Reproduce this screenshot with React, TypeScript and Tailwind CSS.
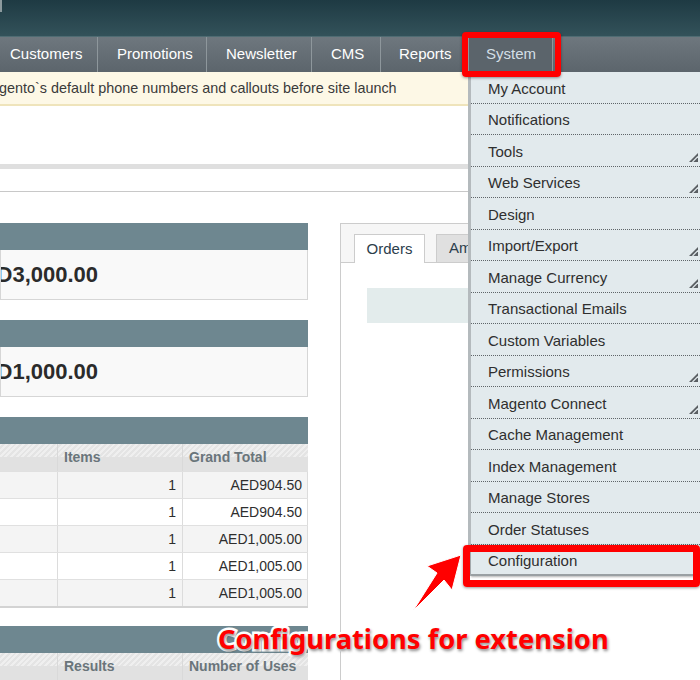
import React from 'react';

const navItems: { label: string; w: string; pl: string }[] = [
  { label: 'Customers', w: 'w-[98px]', pl: 'pl-[10px]' },
  { label: 'Promotions', w: 'w-[109px]', pl: 'pl-[19px]' },
  { label: 'Newsletter', w: 'w-[105px]', pl: 'pl-[19px]' },
  { label: 'CMS', w: 'w-[69px]', pl: 'pl-[19px]' },
  { label: 'Reports', w: 'w-[88px]', pl: 'pl-[18px]' },
];

const menuItems: { label: string; sub?: boolean }[] = [
  { label: 'My Account' },
  { label: 'Notifications' },
  { label: 'Tools', sub: true },
  { label: 'Web Services', sub: true },
  { label: 'Design' },
  { label: 'Import/Export', sub: true },
  { label: 'Manage Currency', sub: true },
  { label: 'Transactional Emails' },
  { label: 'Custom Variables' },
  { label: 'Permissions', sub: true },
  { label: 'Magento Connect', sub: true },
  { label: 'Cache Management' },
  { label: 'Index Management' },
  { label: 'Manage Stores' },
  { label: 'Order Statuses' },
  { label: 'Configuration' },
];

const orders = ['AED904.50', 'AED904.50', 'AED1,005.00', 'AED1,005.00', 'AED1,005.00'];

const headBg =
  'bg-[linear-gradient(to_bottom,transparent_50%,#e1e1e1_50%),repeating-linear-gradient(135deg,#efefef_0_2px,#e4e4e4_2px_4px)]';

const SubArrow = () => (
  <svg width="9" height="9" viewBox="0 0 9 9" className="absolute right-[2px] bottom-[4px]">
    <polygon points="9,0 9,9 0,9" fill="#5a5f63" />
    <line x1="9" y1="3.5" x2="3.5" y2="9" stroke="#e2eaed" strokeWidth="1.2" />
  </svg>
);

const TotalBox = ({ value }: { value: string }) => (
  <div>
    <div className="h-[27px] bg-[#6e8790]" />
    <div className="h-[50px] bg-[#f9f9f9] border border-t-0 border-[#d6d6d6] flex items-center overflow-hidden">
      <span className="-ml-[35px] text-[22px] font-bold text-[#2b2b2b] whitespace-nowrap">{value}</span>
    </div>
  </div>
);

export default function App() {
  return (
    <div className="relative w-[700px] h-[680px] overflow-hidden bg-white font-['Liberation_Sans',Arial,sans-serif]">
      {/* top header */}
      <div className="h-[37px] bg-[linear-gradient(to_bottom,#1e3a43,#33525a)] border-b border-[#4f6c73]">
        <div className="w-[2px] h-[12px] bg-[#8c9a9e]" />
      </div>

      {/* nav */}
      <div className="h-[35px] flex bg-[linear-gradient(to_bottom,#6e777e,#5c656c)] text-[15px] text-white whitespace-nowrap">
        {navItems.map((n) => (
          <div key={n.label} className={`${n.w} ${n.pl} shrink-0 flex items-center border-r border-[#8e979c]`}>
            {n.label}
          </div>
        ))}
        <div className="w-[84px] shrink-0 flex items-center pl-[17px] bg-[#5b646b] text-[#d3dfe6] border-r border-[#8e979c]">
          System
        </div>
      </div>

      {/* notice */}
      <div className="h-[34px] bg-[#fdf8e6] border-b-2 border-[#efe4bb] flex items-center pt-[2px] text-[14.4px] text-[#3a3a3a] whitespace-nowrap">
        <span className="-ml-[21px]">Magento`s default phone numbers and callouts before site launch</span>
      </div>

      <div className="h-[58px]" />
      <div className="h-[5px] bg-[#dfdfdf]" />
      <div className="h-[23px] border-b border-[#c8c8c8]" />

      {/* content */}
      <div className="flex pt-[31px]">
        <div className="w-[308px] flex flex-col gap-[20px] shrink-0">
          <TotalBox value="AED3,000.00" />
          <TotalBox value="AED1,000.00" />

          <div>
            <div className="h-[27px] bg-[#6e8790]" />
            <div className={`grid grid-cols-[58px_125px_125px] h-[27px] text-[14px] font-bold text-[#6a757b] ${headBg}`}>
              <div className="border-r border-[#d9d9d9]" />
              <div className="border-r border-[#d9d9d9] pl-[6px] flex items-center">Items</div>
              <div className="pl-[6px] flex items-center">Grand Total</div>
            </div>
            <div className="border-b-2 border-[#d3d3d3]">
              {orders.map((o, i) => (
                <div
                  key={i}
                  className={`grid grid-cols-[58px_125px_125px] h-[27px] text-[14px] text-[#2e2e2e] border-t border-[#e0e0e0] ${
                    i % 2 === 0 ? 'bg-[#f4f4f4]' : 'bg-white'
                  }`}
                >
                  <div className="border-r border-[#dcdcdc]" />
                  <div className="border-r border-[#dcdcdc] flex items-center justify-end pr-[6px]">1</div>
                  <div className="border-r border-[#dcdcdc] flex items-center justify-end pr-[5px]">{o}</div>
                </div>
              ))}
            </div>
          </div>

          <div className="-mt-[2px]">
            <div className="h-[27px] bg-[#6e8790]" />
            <div className={`grid grid-cols-[58px_125px_125px] h-[27px] text-[14px] font-bold text-[#6a757b] ${headBg}`}>
              <div className="border-r border-[#d9d9d9]" />
              <div className="border-r border-[#d9d9d9] pl-[6px] flex items-center">Results</div>
              <div className="pl-[6px] flex items-center">Number of Uses</div>
            </div>
          </div>
        </div>

        {/* right panel */}
        <div className="ml-[32px] flex-1 h-[460px] border-l border-t border-[#cccccc]">
          <div className="h-[39px] bg-[#f6f6f6] border-b border-[#cccccc] flex items-end pl-[13px] gap-[11px]">
            <div className="w-[71px] h-[29px] -mb-px bg-white border border-b-0 border-[#cccccc] flex items-center justify-center text-[15px] text-[#2c3e4c]">
              Orders
            </div>
            <div className="w-[90px] h-[28px] bg-[#e0e0e0] border border-b-0 border-[#cccccc] flex items-center pl-[12px] text-[15px] text-[#2c3e4c]">
              Amounts
            </div>
          </div>
          <div className="ml-[26px] mt-[25px] h-[35px] bg-[#e3ecec]" />
        </div>
      </div>

      {/* System dropdown */}
      <div className="absolute left-[468px] top-[72px] w-[232px] bg-[#e2eaed] border-l-[3px] border-[#b4babd] text-[15px] text-[#2f2f2f]">
        {menuItems.map((m, i) => (
          <div
            key={m.label}
            className={`relative h-[31.5px] flex items-center pl-[17px] pt-[3px] ${
              i === menuItems.length - 1
                ? 'border-b-2 border-[#9aa0a3] shadow-[0_1px_2px_rgba(0,0,0,0.3)]'
                : 'border-b border-dotted border-[#5f6569]'
            }`}
          >
            {m.label}
            {m.sub && <SubArrow />}
          </div>
        ))}
      </div>

      {/* highlight boxes */}
      <div className="absolute left-[462px] top-[32px] w-[99px] h-[45px] border-[6px] border-[#ff0000] rounded-[4px] shadow-[0_1px_3px_rgba(0,0,0,0.4)]" />
      <div className="absolute left-[463px] top-[545px] w-[237px] h-[42px] border-[7px] border-[#ff0000] rounded-[4px] shadow-[0_1px_3px_rgba(0,0,0,0.4)]" />

      {/* arrow */}
      <svg className="absolute left-0 top-0" width="700" height="680" viewBox="0 0 700 680">
        <polygon
          points="461,555 427,566 437,573 413,611 444,580 452,590"
          fill="#ff0000"
          stroke="#ffffff"
          strokeWidth="1"
          strokeLinejoin="round"
        />
      </svg>

      {/* annotation */}
      <div className="absolute left-[218px] top-[625px] leading-none text-[27.3px] font-bold text-[#ff0000] font-['Noto_Sans',sans-serif] whitespace-nowrap [-webkit-text-stroke:5px_white] [paint-order:stroke_fill] [text-shadow:1px_2px_3px_rgba(0,0,0,0.45)]">
        Configurations for extension
      </div>
    </div>
  );
}
